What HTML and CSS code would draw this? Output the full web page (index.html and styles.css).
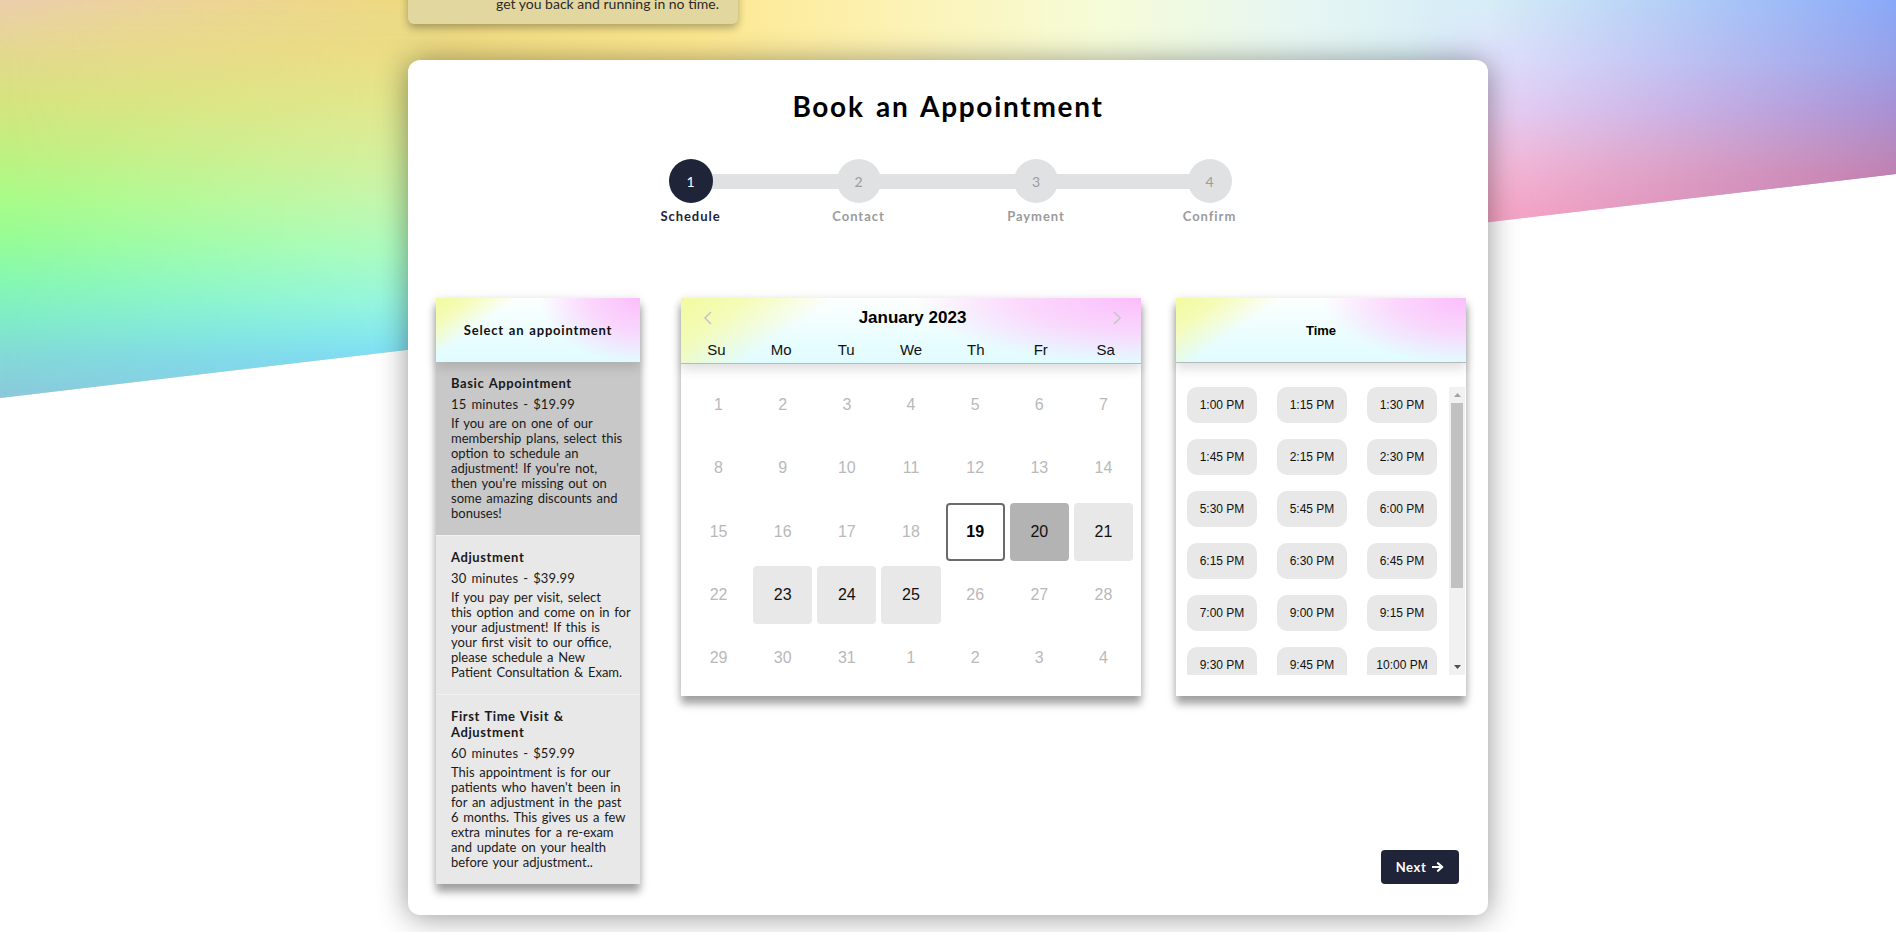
FILE: index.html
```html
<!DOCTYPE html>
<html lang="en">
<head>
<meta charset="utf-8">
<title>Book an Appointment</title>
<link rel="stylesheet" href="styles.css">
</head>
<body>
<div class="hero-bg">
  <div class="bg-left"><div class="bg-left-edge"></div></div>
  <div class="bg-right"><div class="bg-right-edge"></div></div>
</div>

<div class="page">
  <div class="notice">
    <span class="notice-line">Our friendly team is ready to help and</span>
    <span class="notice-line">get you back and running in no time.</span>
  </div>

  <main class="card">
    <h1 class="card-title">Book an Appointment</h1>

    <ol class="stepper">
      <li class="step step-1 is-active"><span class="step-dot">1</span><span class="step-label">Schedule</span></li>
      <li class="step step-2"><span class="step-dot">2</span><span class="step-label">Contact</span></li>
      <li class="step step-3"><span class="step-dot">3</span><span class="step-label">Payment</span></li>
      <li class="step step-4"><span class="step-dot">4</span><span class="step-label">Confirm</span></li>
    </ol>

    <div class="booking">
      <section class="panel appts">
        <header class="mesh appts-head">Select an appointment</header>
        <div class="appt is-selected">
          <div class="appt-name">Basic Appointment</div>
          <div class="appt-price">15 minutes - $19.99</div>
          <p class="appt-desc">If you are on one of our<br>membership plans, select this<br>option to schedule an<br>adjustment! If you're not,<br>then you're missing out on<br>some amazing discounts and<br>bonuses!</p>
        </div>
        <div class="appt">
          <div class="appt-name">Adjustment</div>
          <div class="appt-price">30 minutes - $39.99</div>
          <p class="appt-desc">If you pay per visit, select<br>this option and come on in for<br>your adjustment! If this is<br>your first visit to our office,<br>please schedule a New<br>Patient Consultation &amp; Exam.</p>
        </div>
        <div class="appt">
          <div class="appt-name">First Time Visit &amp;<br>Adjustment</div>
          <div class="appt-price">60 minutes - $59.99</div>
          <p class="appt-desc">This appointment is for our<br>patients who haven't been in<br>for an adjustment in the past<br>6 months. This gives us a few<br>extra minutes for a re-exam<br>and update on your health<br>before your adjustment..</p>
        </div>
      </section>

      <section class="panel calendar">
        <header class="mesh cal-head">
          <div class="cal-title-row">
            <svg class="chev" width="10" height="14" viewBox="0 0 10 14"><polyline points="8,1 2,7 8,13" fill="none" stroke="#c6c6c6" stroke-width="1.6"/></svg>
            <span class="cal-title">January 2023</span>
            <svg class="chev" width="10" height="14" viewBox="0 0 10 14"><polyline points="2,1 8,7 2,13" fill="none" stroke="#c6c6c6" stroke-width="1.6"/></svg>
          </div>
          <div class="dow">
            <span>Su</span><span>Mo</span><span>Tu</span><span>We</span><span>Th</span><span>Fr</span><span>Sa</span>
          </div>
        </header>
        <div class="cal-grid">
          <span class="day">1</span><span class="day">2</span><span class="day">3</span><span class="day">4</span><span class="day">5</span><span class="day">6</span><span class="day">7</span>
          <span class="day">8</span><span class="day">9</span><span class="day">10</span><span class="day">11</span><span class="day">12</span><span class="day">13</span><span class="day">14</span>
          <span class="day">15</span><span class="day">16</span><span class="day">17</span><span class="day">18</span><span class="day is-today">19</span><span class="day is-selected">20</span><span class="day is-avail">21</span>
          <span class="day">22</span><span class="day is-avail">23</span><span class="day is-avail">24</span><span class="day is-avail">25</span><span class="day">26</span><span class="day">27</span><span class="day">28</span>
          <span class="day">29</span><span class="day">30</span><span class="day">31</span><span class="day">1</span><span class="day">2</span><span class="day">3</span><span class="day">4</span>
        </div>
      </section>

      <div class="time-col">
        <section class="panel times">
          <header class="mesh time-head">Time</header>
          <div class="slots-wrap">
            <div class="slots">
              <span class="slot">1:00 PM</span><span class="slot">1:15 PM</span><span class="slot">1:30 PM</span>
              <span class="slot">1:45 PM</span><span class="slot">2:15 PM</span><span class="slot">2:30 PM</span>
              <span class="slot">5:30 PM</span><span class="slot">5:45 PM</span><span class="slot">6:00 PM</span>
              <span class="slot">6:15 PM</span><span class="slot">6:30 PM</span><span class="slot">6:45 PM</span>
              <span class="slot">7:00 PM</span><span class="slot">9:00 PM</span><span class="slot">9:15 PM</span>
              <span class="slot">9:30 PM</span><span class="slot">9:45 PM</span><span class="slot">10:00 PM</span>
              <span class="slot">10:15 PM</span><span class="slot">10:30 PM</span><span class="slot">10:45 PM</span>
            </div>
            <div class="scrollbar">
              <span class="sb-btn"><svg width="7" height="4" viewBox="0 0 7 4"><polygon points="0,4 3.5,0 7,4" fill="#a3a3a3"/></svg></span>
              <span class="sb-thumb"></span>
              <span class="sb-btn sb-down"><svg width="7" height="4" viewBox="0 0 7 4"><polygon points="0,0 3.5,4 7,0" fill="#505050"/></svg></span>
            </div>
          </div>
        </section>
        <button class="next" type="button">Next
          <svg width="12" height="10" viewBox="0 0 12 10"><path d="M0.5 5 H9.5 M6 1.2 L10.2 5 L6 8.8" fill="none" stroke="#fff" stroke-width="2.2" stroke-linecap="round" stroke-linejoin="round"/></svg>
        </button>
      </div>
    </div>
  </main>
</div>
</body>
</html>
```

FILE: styles.css
```css
html, body {
  margin: 0;
  padding: 0;
}

body {
  position: relative;
  height: 932px;
  overflow: hidden;
  background: #ffffff;
  font-family: Lato, "Open Sans", sans-serif;
  color: #111;
}

/* ---------- decorative rainbow backdrop ---------- */
.hero-bg {
  position: absolute;
  top: 0;
  left: 0;
  width: 100%;
  height: 400px;
  z-index: 0;
  display: flex;
  justify-content: space-between;
  clip-path: polygon(0 0, 100% 0, 100% 174px, 0 398px);
  background: linear-gradient(90deg,
    #eccfae 0px, #f0da80 409px, #fde890 700px, #fcf2b4 900px,
    #f6fcd8 1100px, #e6f6f2 1300px, #d4ecf8 1489px, #b0c8fc 1700px, #88a8f8 1896px);
}

.bg-left {
  width: 489px;
  height: 100%;
  background: linear-gradient(to bottom,
    rgba(236, 207, 174, 0) 0px, #e4d890 50px, #d6e47e 100px, #c0f080 150px,
    #a8fc88 200px, #96fc96 240px, #86f8b0 280px, #80ecc8 320px, #84d8d8 360px, #8cc8dc 400px);
  -webkit-mask-image: linear-gradient(to right, #000 409px, transparent 489px);
  mask-image: linear-gradient(to right, #000 409px, transparent 489px);
}

.bg-left-edge {
  width: 100%;
  height: 100%;
  background: linear-gradient(to bottom,
    rgba(240, 216, 128, 0) 0px, #ecdc84 50px, #e2e68c 100px, #d6ee9a 150px,
    #c4f6ac 200px, #acfcc0 250px, #96f6dc 300px, #84e6f0 340px, #80daf4 360px, #84d0f0 400px);
  -webkit-mask-image: linear-gradient(to right, transparent 0px, #000 380px);
  mask-image: linear-gradient(to right, transparent 0px, #000 380px);
}

.bg-right {
  width: 487px;
  height: 100%;
  background: linear-gradient(to bottom,
    #d6eef6 0px, #e0e0fc 60px, #e8d0f4 110px, #f4bcdc 160px, #f8a8c8 210px, #f8a0c4 240px);
  -webkit-mask-image: linear-gradient(to right, transparent 0px, #000 80px);
  mask-image: linear-gradient(to right, transparent 0px, #000 80px);
}

.bg-right-edge {
  width: 100%;
  height: 100%;
  background: linear-gradient(to bottom,
    #88a8f8 0px, #98a0e8 60px, #a890d4 110px, #b888bc 150px, #c080b0 175px, #c080b0 400px);
  -webkit-mask-image: linear-gradient(to right, transparent 80px, #000 100%);
  mask-image: linear-gradient(to right, transparent 80px, #000 100%);
}

/* ---------- page ---------- */
.page {
  position: relative;
  z-index: 1;
  width: 1080px;
  margin: 0 auto;
}

.notice {
  width: 330px;
  box-sizing: border-box;
  margin-top: -33px;
  padding: 10px 12px 11px 88px;
  background: #e3d7a0;
  border-radius: 6px;
  box-shadow: 0 4px 8px rgba(0, 0, 0, 0.3);
  font-size: 14px;
  line-height: 18px;
  color: #2a2a2a;
}

.notice-line {
  display: block;
  white-space: nowrap;
}

.card {
  margin-top: 36px;
  background: #fff;
  border-radius: 12px;
  box-shadow: 0 2px 30px rgba(0, 0, 0, 0.42);
  padding: 29px 28px 31px 28px;
}

.card-title {
  margin: 0;
  font-size: 28px;
  line-height: 34px;
  font-weight: 700;
  letter-spacing: 1.7px;
  word-spacing: 3px;
  text-align: center;
  color: #000;
}

/* ---------- stepper ---------- */
.stepper {
  list-style: none;
  margin: 36px auto 0;
  padding: 0;
  width: 576px;
  display: flex;
  background: linear-gradient(#dfe1e2, #dfe1e2) no-repeat 30px 15px / 519px 15px;
}

.step {
  display: flex;
  flex-direction: column;
  align-items: center;
}

.step-1 { width: 61px; }
.step-2 { width: 51px; margin-left: 112px; }
.step-3 { width: 58px; margin-left: 123px; }
.step-4 { width: 53px; margin-left: 118px; }

.step-dot {
  width: 44px;
  height: 44px;
  border-radius: 50%;
  background: #dfe1e2;
  color: #9c9c9c;
  display: flex;
  align-items: center;
  justify-content: center;
  font-size: 14px;
}

.step-label {
  margin-top: 5px;
  font-size: 13px;
  line-height: 16px;
  font-weight: 700;
  letter-spacing: 0.95px;
  color: #9b9b9b;
  white-space: nowrap;
}

.step.is-active .step-dot {
  background: #1f2439;
  color: #fff;
}

.step.is-active .step-label {
  color: #1f2439;
}

/* ---------- booking row ---------- */
.booking {
  display: flex;
  align-items: stretch;
  margin-top: 74px;
  margin-right: -7px;
}

.panel {
  background: #fff;
  box-shadow: 0 8px 8px rgba(0, 0, 0, 0.35), 0 0 10px rgba(0, 0, 0, 0.08);
}

.mesh {
  position: relative;
  z-index: 1;
  background:
    radial-gradient(ellipse 58% 120% at 100% 0%, #fbbdfc 0%, rgba(252, 200, 252, 0.7) 45%, rgba(253, 225, 253, 0) 85%),
    linear-gradient(145deg, #f2faa0 0%, rgba(244, 251, 170, 0.85) 12%, rgba(255, 255, 255, 0) 28%),
    linear-gradient(to bottom, #fdfffe 0%, #eafdff 60%, #e0fcff 100%);
  box-shadow: 0 6px 10px rgba(0, 0, 0, 0.12);
}

/* appointments */
.appts {
  width: 204px;
  margin-right: 41px;
  align-self: flex-start;
}

.appts-head {
  height: 64px;
  display: flex;
  align-items: center;
  justify-content: center;
  font-size: 13px;
  font-weight: 700;
  letter-spacing: 0.8px;
  word-spacing: 1px;
  color: #111;
}

.appt {
  padding: 13px 15px 14px;
  background: #e8e8e8;
  font-size: 13px;
  word-spacing: 1.4px;
  color: #1a1a1a;
}

.appt + .appt {
  border-top: 1px solid #f1f1f1;
}

.appt.is-selected {
  background: #c8c8c8;
}

.appt-name {
  font-weight: 700;
  line-height: 16px;
  letter-spacing: 0.6px;
  word-spacing: 1px;
}

.appt-price {
  margin-top: 5px;
  line-height: 16px;
  letter-spacing: 0.2px;
}

.appt-desc {
  margin: 4px 0 0;
  line-height: 15px;
  white-space: nowrap;
}

/* calendar */
.calendar {
  width: 460px;
  margin-right: 35px;
  align-self: flex-start;
  font-family: "Liberation Sans", Arial, sans-serif;
}

.cal-head {
  height: 66px;
  box-sizing: border-box;
  border-bottom: 1px solid #b8b8b8;
  padding: 8px 3px 0;
}

.cal-title-row {
  height: 24px;
  display: flex;
  align-items: center;
  justify-content: space-between;
  padding: 0 16px 0 19px;
}

.cal-title {
  font-size: 17px;
  font-weight: 700;
  color: #000;
}

.dow {
  margin-top: 10px;
  display: grid;
  grid-template-columns: repeat(7, 1fr);
  font-size: 15px;
  line-height: 20px;
  text-align: center;
  color: #111;
}

.cal-grid {
  display: grid;
  grid-template-columns: repeat(7, 1fr);
  grid-auto-rows: 58.25px;
  gap: 5px;
  padding: 12px 8px 9px;
}

.day {
  display: flex;
  align-items: center;
  justify-content: center;
  border-radius: 4px;
  font-size: 16px;
  color: #b9b9b9;
  box-sizing: border-box;
}

.day.is-avail {
  background: #e8e8e8;
  color: #111;
}

.day.is-selected {
  background: #b3b3b3;
  color: #111;
}

.day.is-today {
  border: 2px solid #6b6b6b;
  color: #000;
  font-weight: 700;
}

/* time */
.time-col {
  width: 290px;
  display: flex;
  flex-direction: column;
}

.times {
  font-family: "Liberation Sans", Arial, sans-serif;
}

.time-head {
  height: 65px;
  box-sizing: border-box;
  border-bottom: 1px solid #b8b8b8;
  display: flex;
  align-items: center;
  justify-content: center;
  font-size: 13px;
  font-weight: 700;
  color: #000;
}

.slots-wrap {
  display: flex;
  height: 288px;
  margin: 24px 1px 21px 0;
}

.slots {
  flex: 1;
  overflow: hidden;
  padding-left: 11px;
  display: grid;
  grid-template-columns: repeat(3, 70px);
  grid-auto-rows: 36px;
  column-gap: 20px;
  row-gap: 16px;
  align-content: start;
}

.slot {
  display: flex;
  align-items: center;
  justify-content: center;
  background: #e8e8e8;
  border-radius: 10px;
  font-size: 12px;
  color: #111;
}

.scrollbar {
  width: 16px;
  background: #f1f1f1;
  display: flex;
  flex-direction: column;
  align-items: center;
}

.sb-btn {
  height: 16px;
  width: 16px;
  display: flex;
  align-items: center;
  justify-content: center;
  flex: none;
}

.sb-thumb {
  width: 12px;
  height: 185px;
  background: #c1c1c1;
  flex: none;
}

.sb-down {
  margin-top: auto;
}

.next {
  margin-top: auto;
  margin-right: 7px;
  align-self: flex-end;
  width: 78px;
  height: 34px;
  border: none;
  border-radius: 4px;
  background: #1f2439;
  color: #fff;
  font-family: Lato, "Open Sans", sans-serif;
  font-size: 13px;
  font-weight: 700;
  letter-spacing: 0.6px;
  display: flex;
  align-items: center;
  justify-content: center;
  gap: 6px;
  padding: 0;
}
```
